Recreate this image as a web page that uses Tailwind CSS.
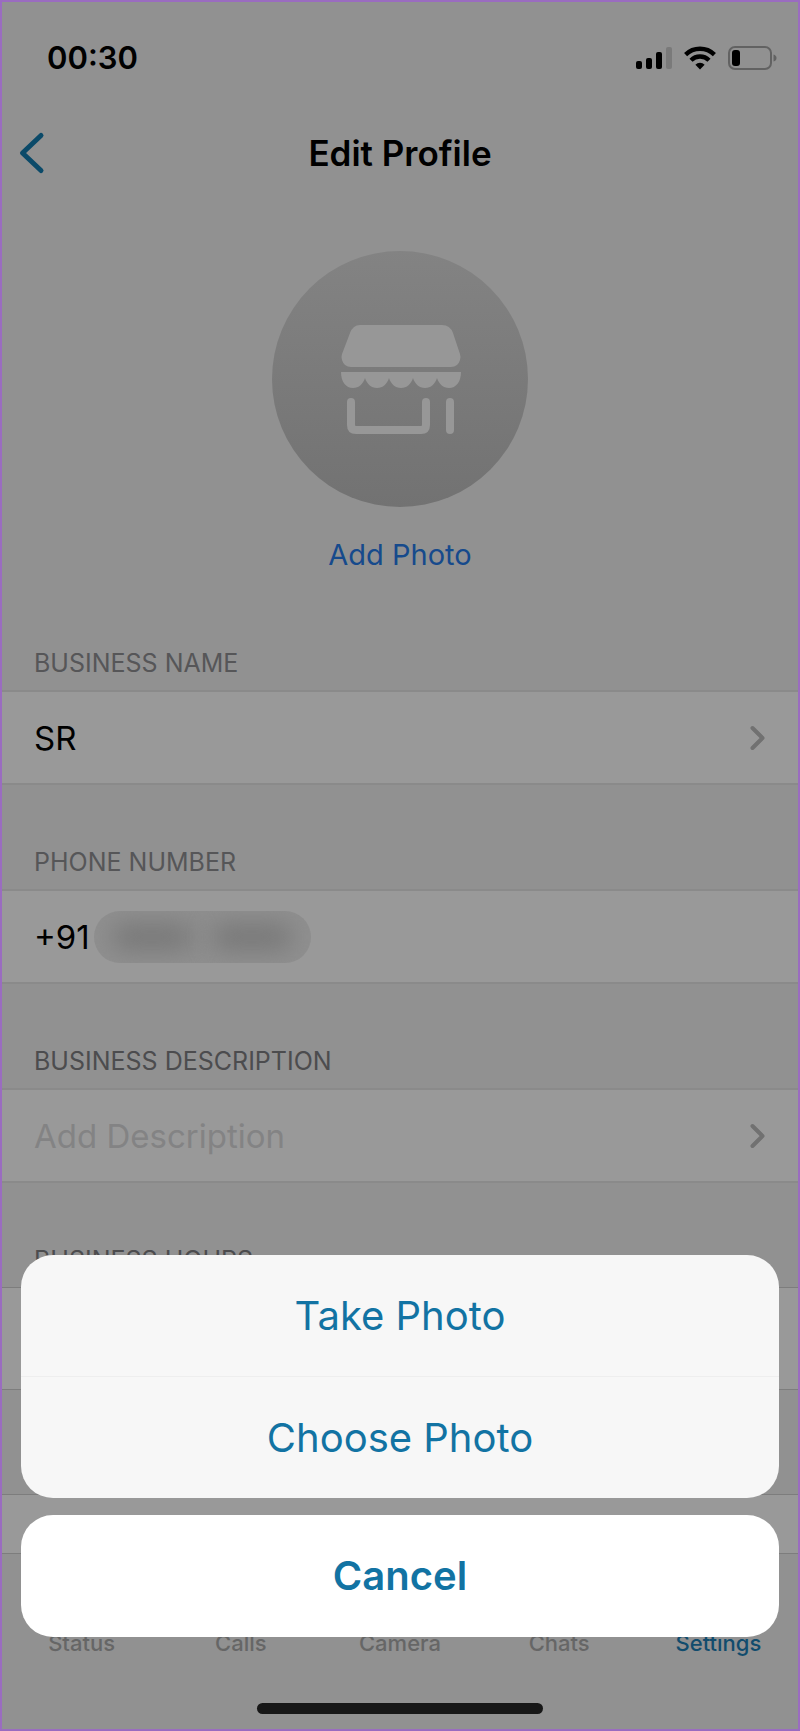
<!DOCTYPE html>
<html lang="en">
<head>
  <meta charset="UTF-8" />
  <meta name="viewport" content="width=device-width, initial-scale=1" />
  <title>Edit Profile</title>
  <script src="https://cdn.jsdelivr.net/npm/@tailwindcss/browser@4"></script>
</head>
<body class="relative min-h-screen flex flex-col overflow-hidden border-2 border-[#9a6cc0] bg-[#919191] text-black font-['Inter','Liberation_Sans',sans-serif]">

  <!-- Status bar -->
  <div class="h-[112px] pl-[45px] pr-[21px] flex items-center justify-between">
    <span class="text-[31px] leading-10 font-semibold">00:30</span>
    <div class="flex items-center gap-3">
      <svg class="w-9 h-6" viewBox="0 0 36 24">
        <rect x="0" y="15" width="6" height="8" rx="2" />
        <rect x="10" y="12" width="6" height="11" rx="2" />
        <rect x="20" y="6" width="6" height="17" rx="2" />
        <rect x="30" y="1" width="6" height="22" rx="2" fill="#7a7a7a" />
      </svg>
      <svg class="w-8 h-6" viewBox="0 0 32 24" fill="none" stroke="#000" stroke-width="4.4">
        <path d="M1.6 8.6a20.6 20.6 0 0 1 28.8 0" />
        <path d="M7 14.2a12.8 12.8 0 0 1 18 0" />
        <path d="M16 23.4l-4.6-4.7a6.6 6.6 0 0 1 9.2 0z" fill="#000" stroke="none" />
      </svg>
      <svg class="w-[49px] h-6" viewBox="0 0 49 24">
        <rect x="1" y="1" width="42" height="22" rx="6" fill="none" stroke="#626262" stroke-width="2" />
        <rect x="4" y="4" width="8" height="16" rx="3" />
        <path d="M45.5 8.5q3 1 3 3.5t-3 3.500z" fill="#626262" />
      </svg>
    </div>
  </div>

  <!-- Nav -->
  <header class="h-[78px] px-4 grid grid-cols-[1fr_auto_1fr] items-center">
    <button aria-label="Back" class="w-7">
      <svg class="w-7 h-11" viewBox="0 0 28 44" fill="none" stroke="#0b4a69" stroke-width="5" stroke-linecap="round" stroke-linejoin="round">
        <path d="M23 4.500L4.500 22L23 39.500" />
      </svg>
    </button>
    <h1 class="text-[35px] leading-10 font-semibold">Edit Profile</h1>
  </header>

  <main class="flex-1 flex flex-col">

    <!-- Avatar -->
    <section class="pt-[59px] pb-[11px] flex flex-col items-center gap-7">
      <div class="size-64 rounded-full bg-linear-to-b from-[#838383] to-[#727272]">
        <svg class="size-64" viewBox="0 0 256 256" fill="#979797">
          <path d="M88 74h82q8 0 11 8l7 21q1 3 0 6-2 7-9 7H79q-7 0-9-7-1-3 0-6l8-21q3-8 10-8z" />
          <path d="M69 121h120c0 10-5 16-12 16-6 0-10-4-12-10-2 6-6 10-12 10s-10-4-12-10c-2 6-6 10-12 10s-10-4-12-10c-2 6-6 10-12 10s-10-4-12-10c-2 6-6 10-12 10-7 0-12-6-12-16z" />
          <path d="M79 151v23q0 5 5 5h65q5 0 5-5v-23M178 151v28" fill="none" stroke="#979797" stroke-width="8" stroke-linecap="round" />
        </svg>
      </div>
      <button class="text-[29px] leading-10 text-[#164a8c]">Add Photo</button>
    </section>

    <section>
      <h2 class="h-[104px] px-8 pb-[11px] flex items-end text-[25px] leading-8 text-[#565658]">BUSINESS NAME</h2>
      <button class="w-full h-[95px] px-8 flex items-center justify-between border-y-2 border-[#8a8a8a] bg-[#999] text-[33px] leading-10">
        <span>SR</span>
        <svg class="w-4 h-7" viewBox="0 0 16 28" fill="none" stroke="#717171" stroke-width="4" stroke-linecap="round" stroke-linejoin="round">
          <path d="M2.500 4L12.500 14L2.500 24" />
        </svg>
      </button>
    </section>

    <section>
      <h2 class="h-[104px] px-8 pb-[11px] flex items-end text-[25px] leading-8 text-[#565658]">PHONE NUMBER</h2>
      <div class="h-[95px] px-8 flex items-center gap-1 border-y-2 border-[#8a8a8a] bg-[#999] text-[33px] leading-10">
        <span>+91</span>
        <!-- hidden digits -->
        <span class="w-[217px] h-[52px] flex items-center justify-center gap-5 rounded-full bg-[#8f8f8f] overflow-hidden">
          <span class="w-20 h-6 rounded-full bg-[#767676] blur-md"></span>
          <span class="w-20 h-6 rounded-full bg-[#767676] blur-md"></span>
        </span>
      </div>
    </section>

    <section>
      <h2 class="h-[104px] px-8 pb-[11px] flex items-end text-[25px] leading-8 text-[#4c4c4e]">BUSINESS DESCRIPTION</h2>
      <button class="w-full h-[95px] px-8 flex items-center justify-between border-y-2 border-[#8a8a8a] bg-[#999] text-[33px] leading-10">
        <span class="text-[#838384]">Add Description</span>
        <svg class="w-4 h-7" viewBox="0 0 16 28" fill="none" stroke="#717171" stroke-width="4" stroke-linecap="round" stroke-linejoin="round">
          <path d="M2.500 4L12.500 14L2.500 24" />
        </svg>
      </button>
    </section>

    <section>
      <h2 class="h-[104px] px-8 pb-[11px] flex items-end text-[25px] leading-8 text-[#4c4c4e]">BUSINESS HOURS</h2>
      <div class="h-[103px] border-y border-[#7d7d7d] bg-[#999]"></div>
    </section>

    <div class="flex-1 mt-[104px] border-t border-[#7d7d7d] bg-[#999]"></div>
  </main>

  <!-- Tab bar -->
  <footer class="h-44 flex flex-col justify-between border-t border-[#7d7d7d]">
    <nav class="pt-[75px] grid grid-cols-5 text-center text-[22px] leading-7 font-medium text-[#666]">
      <a href="#">Status</a>
      <a href="#">Calls</a>
      <a href="#">Camera</a>
      <a href="#">Chats</a>
      <a href="#" class="text-[#114c6d]">Settings</a>
    </nav>
    <div class="w-[286px] h-[11px] mx-auto mb-[15px] rounded-full bg-[#171717]"></div>
  </footer>

  <!-- Action sheet -->
  <div role="dialog" aria-label="Add Photo" class="absolute inset-x-[19px] bottom-[92px] flex flex-col gap-[17px] text-[40px] leading-[48px] text-[#1273a3]">
    <div class="flex flex-col rounded-[32px] bg-[#f7f7f7] overflow-hidden">
      <button class="h-[122px] border-b border-[#eee]">Take Photo</button>
      <button class="h-[121px]">Choose Photo</button>
    </div>
    <button class="h-[122px] rounded-[32px] bg-white font-semibold">Cancel</button>
  </div>

</body>
</html>
